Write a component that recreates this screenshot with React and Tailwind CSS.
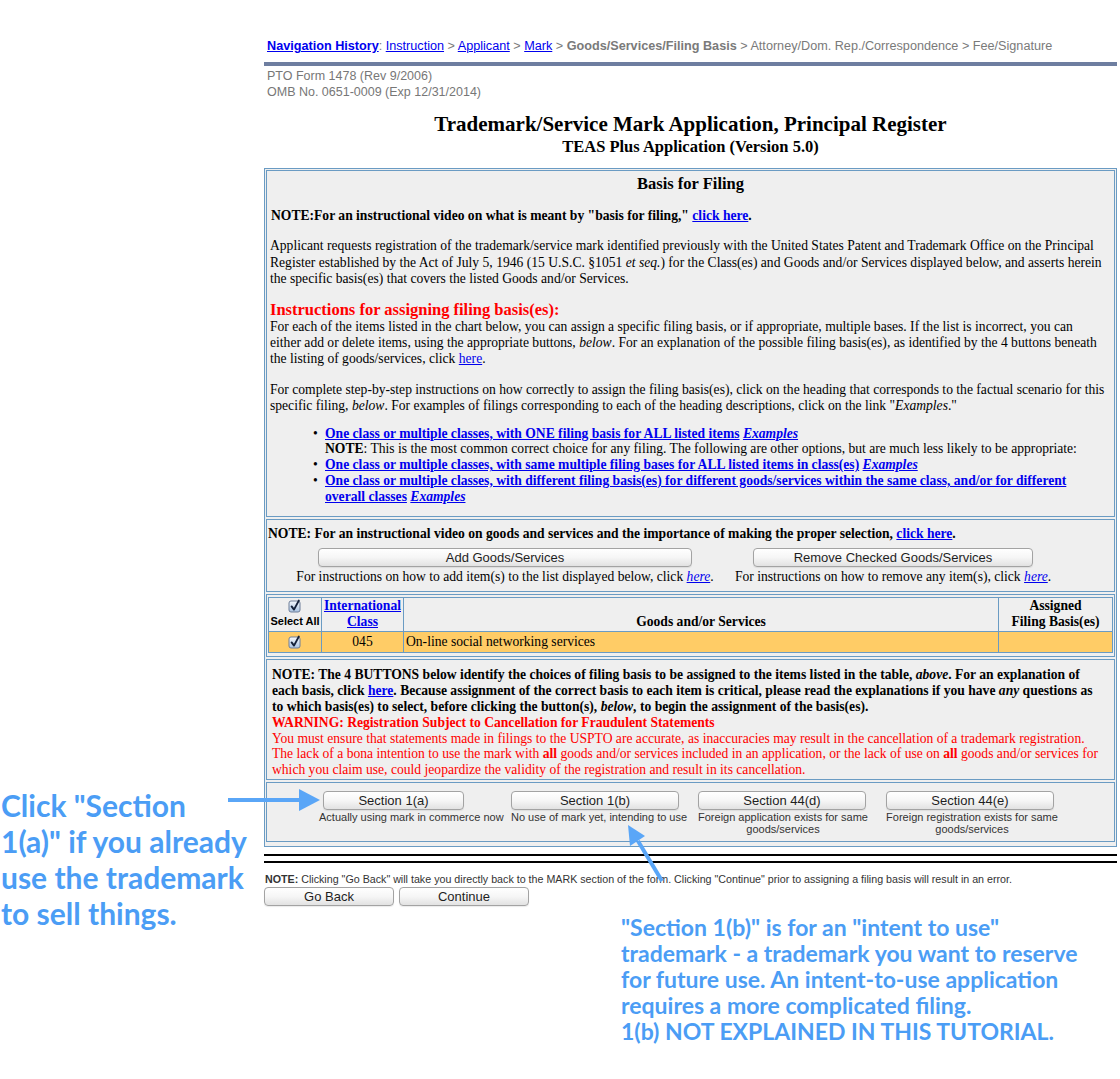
import React from "react";

const SERIF = "font-['Liberation_Serif','Times_New_Roman',serif]";
const SANS = "font-['Liberation_Sans',Arial,sans-serif]";

function A({ children, className = "" }) {
  return <a className={"text-[#0000ee] underline " + className}>{children}</a>;
}

function MacButton({ children, className = "" }) {
  return (
    <button
      className={
        "flex h-[19px] items-center justify-center rounded-[4px] border border-[#a3a3a3] bg-linear-to-b from-white via-[#f6f6f6] to-[#e2e2e2] text-[13px] leading-none text-[#1e1e1e] shadow-[0_1px_1px_rgba(0,0,0,0.08)] font-['Liberation_Sans',Arial,sans-serif] " +
        className
      }
    >
      {children}
    </button>
  );
}

function Check() {
  return (
    <svg width="14" height="14" viewBox="0 0 14 14" className="block">
      <defs>
        <linearGradient id="cbg" x1="0" y1="0" x2="0" y2="1">
          <stop offset="0" stopColor="#f4f8fd" />
          <stop offset="0.5" stopColor="#cfdef0" />
          <stop offset="1" stopColor="#a9c3e2" />
        </linearGradient>
      </defs>
      <rect x="1" y="2" width="11" height="11" rx="2" fill="url(#cbg)" stroke="#6e7f99" strokeWidth="1" />
      <path d="M3.6 7.4 L6 10.6 L10.8 1.6" fill="none" stroke="#14213a" strokeWidth="1.9" strokeLinecap="round" strokeLinejoin="round" />
    </svg>
  );
}

function Bullet({ children, bullet = true }) {
  return (
    <li className="flex">
      <span className="w-[12px] shrink-0">{bullet ? "•" : ""}</span>
      <span>{children}</span>
    </li>
  );
}

export default function App() {
  const border = "border border-[#6a9bc3]";
  return (
    <div className="relative min-h-[1079px] w-[1120px] overflow-hidden bg-white">
      <div className="ml-[264px] w-[853px] pt-[38px]">
        {/* navigation */}
        <div className={"whitespace-nowrap pl-[3px] text-[12.65px] leading-[16px] text-[#7a7a7a] " + SANS}>
          <a className="font-bold text-[#0000ee] underline">Navigation History</a>
          <span>: </span>
          <A>Instruction</A> &gt; <A>Applicant</A> &gt; <A>Mark</A> &gt;{" "}
          <span className="font-bold">Goods/Services/Filing Basis</span> &gt; Attorney/Dom. Rep./Correspondence &gt;
          Fee/Signature
        </div>
        <div className="mt-[8px] h-[4px] bg-[#6e7ea0]" />
        <div className={"mt-[2px] pl-[3px] text-[12.5px] leading-[16px] text-[#777] " + SANS}>
          <div>PTO Form 1478 (Rev 9/2006)</div>
          <div>OMB No. 0651-0009 (Exp 12/31/2014)</div>
        </div>

        <div className={SERIF + " text-black"}>
          <div className="mt-[12px] text-center text-[21px] font-bold leading-[24px]">
            Trademark/Service Mark Application, Principal Register
          </div>
          <div className="mt-[1px] text-center text-[16.5px] font-bold leading-[20px]">
            TEAS Plus Application (Version 5.0)
          </div>

          {/* main box */}
          <div className={"mt-[11px] flex flex-col gap-[2px] bg-[#efefef] p-[1px] pb-[4px] " + border}>
            {/* cell 1 */}
            <div className={"px-[3px] pt-[4px] pb-[12px] text-[13.6px] leading-[16px] " + border}>
              <div className="text-center text-[16.5px] font-bold leading-[18px]">Basis for Filing</div>
              <div className="mt-[15px] whitespace-nowrap pl-[1px] font-bold leading-[16px]">
                NOTE:For an instructional video on what is meant by "basis for filing," <A>click here</A>.
              </div>
              <p className="mt-[14px] whitespace-nowrap leading-[16.5px]">
                Applicant requests registration of the trademark/service mark identified previously with the United
                States Patent and Trademark Office on the Principal
                <br />
                Register established by the Act of July 5, 1946 (15 U.S.C. §1051 <i>et seq.</i>) for the Class(es)
                and Goods and/or Services displayed below, and asserts herein
                <br />
                the specific basis(es) that covers the listed Goods and/or Services.
              </p>
              <div className="mt-[12px] text-[16.5px] font-bold leading-[19px] text-[#ff0000]">
                Instructions for assigning filing basis(es):
              </div>
              <p className="whitespace-nowrap">
                For each of the items listed in the chart below, you can assign a specific filing basis, or if
                appropriate, multiple bases. If the list is incorrect, you can
                <br />
                either add or delete items, using the appropriate buttons, <i>below</i>. For an explanation of the
                possible filing basis(es), as identified by the 4 buttons beneath
                <br />
                the listing of goods/services, click <A>here</A>.
              </p>
              <p className="mt-[15px] whitespace-nowrap">
                For complete step-by-step instructions on how correctly to assign the filing basis(es), click on the
                heading that corresponds to the factual scenario for this
                <br />
                specific filing, <i>below</i>. For examples of filings corresponding to each of the heading
                descriptions, click on the link "<i>Examples</i>."
              </p>
              <ul className="ml-[43px] mt-[12px] whitespace-nowrap leading-[15.8px]">
                <Bullet>
                  <A className="font-bold">One class or multiple classes, with ONE filing basis for ALL listed items</A>{" "}
                  <A className="font-bold italic">Examples</A>
                </Bullet>
                <Bullet bullet={false}>
                  <b>NOTE</b>: This is the most common correct choice for any filing. The following are other options,
                  but are much less likely to be appropriate:
                </Bullet>
                <Bullet>
                  <A className="font-bold">
                    One class or multiple classes, with same multiple filing bases for ALL listed items in class(es)
                  </A>{" "}
                  <A className="font-bold italic">Examples</A>
                </Bullet>
                <Bullet>
                  <A className="font-bold">
                    One class or multiple classes, with different filing basis(es) for different goods/services within
                    the same class, and/or for different
                    <br />
                    overall classes
                  </A>{" "}
                  <A className="font-bold italic">Examples</A>
                </Bullet>
              </ul>
            </div>

            {/* cell 2 */}
            <div className={"pl-[1px] pt-[6px] pb-[6px] text-[13.6px] leading-[16px] " + border}>
              <div className="whitespace-nowrap font-bold">
                NOTE: For an instructional video on goods and services and the importance of making the proper
                selection, <A>click here</A>.
              </div>
              <div className="mt-[6px] flex">
                <div className="ml-[5px] flex w-[464px] flex-col items-center">
                  <MacButton className="w-[374px]">Add Goods/Services</MacButton>
                  <div className="mt-[2px] whitespace-nowrap">
                    For instructions on how to add item(s) to the list displayed below, click{" "}
                    <A className="italic">here</A>.
                  </div>
                </div>
                <div className="flex w-[312px] flex-col items-center">
                  <MacButton className="w-[280px]">Remove Checked Goods/Services</MacButton>
                  <div className="mt-[2px] whitespace-nowrap">
                    For instructions on how to remove any item(s), click <A className="italic">here</A>.
                  </div>
                </div>
              </div>
            </div>

            {/* cell 3: table */}
            <div className={"px-[1px] pt-[2px] pb-[3px] " + border}>
              <table className="w-full border-collapse border border-[#6a9bc3] text-[13.6px] leading-[16px]">
                <thead>
                  <tr className="h-[34px] bg-[#efefef]">
                    <th className="w-[53px] border border-[#6a9bc3] p-0 align-top">
                      <div className="flex flex-col items-center pt-[1px]">
                        <Check />
                        <span className={"mt-[1px] text-[11px] font-bold leading-[14px] " + SANS}>Select All</span>
                      </div>
                    </th>
                    <th className="w-[82px] border border-[#6a9bc3] px-0 pt-0 pb-[1px] align-bottom font-bold">
                      <A>
                        International
                        <br />
                        Class
                      </A>
                    </th>
                    <th className="border border-[#6a9bc3] px-0 pt-0 pb-[1px] align-bottom font-bold">
                      Goods and/or Services
                    </th>
                    <th className="w-[114px] border border-[#6a9bc3] px-0 pt-0 pb-[1px] align-bottom font-bold">
                      Assigned
                      <br />
                      Filing Basis(es)
                    </th>
                  </tr>
                </thead>
                <tbody>
                  <tr className="h-[21px] bg-[#ffcc66]">
                    <td className="border border-[#6a9bc3] p-0">
                      <div className="flex justify-center">
                        <Check />
                      </div>
                    </td>
                    <td className="border border-[#6a9bc3] p-0 text-center">045</td>
                    <td className="border border-[#6a9bc3] py-0 pl-[2px]">On-line social networking services</td>
                    <td className="border border-[#6a9bc3] p-0"></td>
                  </tr>
                </tbody>
              </table>
            </div>

            {/* cell 4 */}
            <div className={"whitespace-nowrap pl-[5px] pt-[7px] pb-[1px] text-[13.6px] leading-[15.8px] " + border}>
              <div className="font-bold">
                NOTE: The 4 BUTTONS below identify the choices of filing basis to be assigned to the items listed in
                the table, <i>above</i>. For an explanation of
                <br />
                each basis, click <A>here</A>. Because assignment of the correct basis to each item is critical,
                please read the explanations if you have <i>any</i> questions as
                <br />
                to which basis(es) to select, before clicking the button(s), <i>below</i>, to begin the assignment of
                the basis(es).
              </div>
              <div className="font-bold text-[#ff0000]">
                WARNING: Registration Subject to Cancellation for Fraudulent Statements
              </div>
              <div className="text-[#ff0000]">
                You must ensure that statements made in filings to the USPTO are accurate, as inaccuracies may result
                in the cancellation of a trademark registration.
                <br />
                The lack of a bona intention to use the mark with <b>all</b> goods and/or services included in an
                application, or the lack of use on <b>all</b> goods and/or services for
                <br />
                which you claim use, could jeopardize the validity of the registration and result in its cancellation.
              </div>
            </div>

            {/* cell 5 */}
            <div className={"pt-[8px] pb-[6px] " + border}>
              <div className={"ml-[52px] flex text-[11px] leading-[12px] text-[#333] " + SANS}>
                <div className="w-[192px]">
                  <MacButton className="ml-[4px] w-[141px]">Section 1(a)</MacButton>
                  <div className="mt-[1px] whitespace-nowrap">Actually using mark in commerce now</div>
                </div>
                <div className="w-[187px]">
                  <MacButton className="w-[168px]">Section 1(b)</MacButton>
                  <div className="mt-[1px] whitespace-nowrap">No use of mark yet, intending to use</div>
                </div>
                <div className="w-[188px]">
                  <MacButton className="w-[168px]">Section 44(d)</MacButton>
                  <div className="mt-[1px] w-[170px] text-center">
                    Foreign application exists for same
                    <br />
                    goods/services
                  </div>
                </div>
                <div className="w-[190px]">
                  <MacButton className="w-[168px]">Section 44(e)</MacButton>
                  <div className="mt-[1px] w-[172px] text-center">
                    Foreign registration exists for same
                    <br />
                    goods/services
                  </div>
                </div>
              </div>
            </div>
          </div>
        </div>

        {/* double rule */}
        <div className="mt-[7px] h-[2px] bg-black" />
        <div className="mt-[5px] h-[2px] bg-black" />

        <div className={"mt-[10px] whitespace-nowrap pl-[1px] text-[10.7px] leading-[12px] text-[#333] " + SANS}>
          <b>NOTE:</b> Clicking "Go Back" will take you directly back to the MARK section of the form. Clicking
          "Continue" prior to assigning a filing basis will result in an error.
        </div>
        <div className="mt-[2px] flex gap-[5px]">
          <MacButton className="w-[130px]">Go Back</MacButton>
          <MacButton className="w-[130px]">Continue</MacButton>
        </div>
      </div>

      {/* annotations */}
      <div className="pointer-events-none absolute left-[1px] top-[787px] font-['Lato',sans-serif] text-[30px] font-bold leading-[36px] text-[#4b9df5]">
        <div>Click "Section</div>
        <div>1(a)" if you already</div>
        <div>use the trademark</div>
        <div>to sell things.</div>
      </div>
      <div className="pointer-events-none absolute left-[621px] top-[914px] font-['Lato',sans-serif] text-[23px] font-bold leading-[26px] text-[#4b9df5]">
        <div>"Section 1(b)" is for an "intent to use"</div>
        <div>trademark - a trademark you want to reserve</div>
        <div>for future use. An intent-to-use application</div>
        <div>requires a more complicated filing.</div>
        <div>1(b) NOT EXPLAINED IN THIS TUTORIAL.</div>
      </div>
      <svg className="pointer-events-none absolute left-0 top-0" width="1120" height="1079" viewBox="0 0 1120 1079">
        <line x1="228" y1="800" x2="302" y2="800" stroke="#5aa6f7" strokeWidth="4" />
        <polygon points="299,789 320,800 299,811" fill="#5aa6f7" />
        <line x1="662" y1="881" x2="638" y2="841" stroke="#5aa6f7" strokeWidth="4" />
        <polygon points="628,825 645,836 630,846" fill="#5aa6f7" />
      </svg>
    </div>
  );
}
